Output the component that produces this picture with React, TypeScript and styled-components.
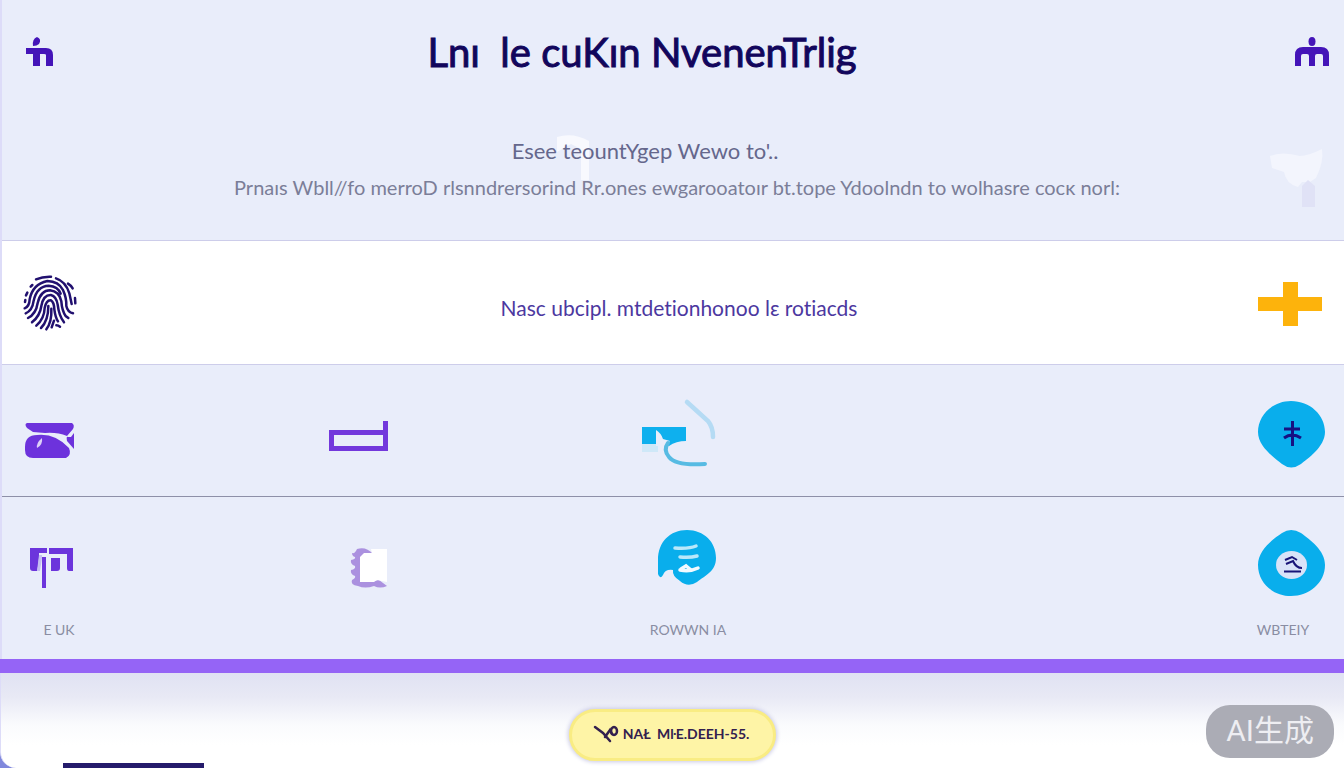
import React from "react";
import styled, { createGlobalStyle } from "styled-components";

const GlobalStyle = createGlobalStyle`
  *, *::before, *::after { box-sizing: border-box; }
  body {
    margin: 0;
    background: #8088dc;
    font-family: Lato, "Noto Sans CJK SC", sans-serif;
    font-variant-ligatures: none;
  }
  h1, p { margin: 0; font-weight: 400; }
  svg { display: block; flex: none; overflow: visible; }
`;

const Page = styled.div`
  position: relative;
  display: flex;
  flex-direction: column;
  min-height: 100vh;
  overflow: hidden;
`;

const Main = styled.main`
  border-left: 2px solid #dddcf8;
  background: #e9edfa;
`;

const Header = styled.header`
  position: relative;
  height: 240px;
  padding: 30px 14px 0 22px;
`;

const TitleBar = styled.div`
  display: flex;
  align-items: center;
  justify-content: space-between;
  height: 44px;
`;

const Title = styled.h1`
  padding-right: 64px;
  color: #12065c;
  font-size: 40px;
  line-height: 44px;
  -webkit-text-stroke: 1px #12065c;
  white-space: pre;
`;

const IconButton = styled.button`
  display: block;
  padding: 0;
  border: 0;
  background: none;
  cursor: pointer;
`;

const Intro = styled.div`
  position: relative;
  display: flex;
  flex-direction: column;
  align-items: center;
  gap: 4px;
  padding-top: 61px;
`;

const IntroLine = styled.p<{ $lead?: boolean }>`
  position: relative;
  padding-right: ${(p) => (p.$lead ? "64px" : "0")};
  color: ${(p) => (p.$lead ? "#65678c" : "#7b7e98")};
  font-size: ${(p) => (p.$lead ? "22px" : "20px")};
  line-height: 32px;
  white-space: nowrap;
`;

const Ghost = styled.svg<{ $side: "center" | "right" }>`
  position: absolute;
  top: ${(p) => (p.$side === "center" ? "58px" : "148px")};
  ${(p) => (p.$side === "center" ? "left: calc(50% - 122px);" : "right: 14px;")}
`;

const Row = styled.section<{ $line: string; $bottom: string }>`
  display: grid;
  grid-template-columns: 30fr 31fr 36fr 31fr;
  border-top: 1px solid ${(p) => p.$line};
  padding: 33px 19px ${(p) => p.$bottom} 22px;
`;

const Feature = styled.section`
  display: flex;
  align-items: center;
  justify-content: space-between;
  height: 124px;
  padding: 0 22px 0 20px;
  border-top: 1px solid #cdcdea;
  background: #fff;
`;

const FeatureText = styled.p`
  padding: 10px 0 0 22px;
  color: #4c389f;
  font-size: 21px;
  line-height: 28px;
`;

const Item = styled.div<{ $end?: boolean }>`
  display: flex;
  flex-direction: column;
  align-items: center;
  justify-self: ${(p) => (p.$end ? "end" : "start")};
  gap: 22px;
`;

const Caption = styled.span`
  color: #8a8da3;
  font-size: 14px;
  line-height: 20px;
  white-space: nowrap;
`;

const Bar = styled.div`
  height: 14px;
  background: #9564f6;
`;

const Footer = styled.footer`
  display: flex;
  flex: 1;
  flex-direction: column;
  align-items: center;
  justify-content: space-between;
  min-height: 95px;
  padding-top: 36px;
  border-left: 1px solid #dddcf8;
  border-bottom-left-radius: 16px;
  background: linear-gradient(#e0e2f3 0, #e8e9f5 24px, #fafbfd 52px, #fff 72px);
`;

const Badge = styled.button`
  display: flex;
  align-items: center;
  gap: 4px;
  height: 52px;
  padding: 0 24px 2px 22px;
  border: 3px solid #f9ec83;
  border-radius: 26px;
  background: #fef4a6;
  box-shadow: 0 0 4px 1px #c9c9e4;
  color: #33204e;
  font: 700 14px/20px Lato, sans-serif;
  white-space: pre;
  cursor: pointer;
`;

const Block = styled.div`
  align-self: flex-start;
  width: 141px;
  height: 5px;
  margin-left: 62px;
  background: #251b6b;
`;

const Watermark = styled.div`
  position: absolute;
  right: 10px;
  bottom: 10px;
  height: 53px;
  padding: 0 20px;
  border-radius: 24px;
  background: #abacb5;
  color: #eeeef2;
  font: 400 30px/52px Roboto, "Noto Sans CJK SC", sans-serif;
`;

const LeftMark = () => (
  <svg width="30" height="32" viewBox="0 0 30 32" fill="#4414b8">
    <path d="M9 10Q8 3 13 1Q18 3 15 8Q13 10 9 10Z" />
    <path d="M2 12H22Q29 12 29 19V30H22V19Q22 18 20 18H16V30H9V18H2Z" />
  </svg>
);

const RightMark = () => (
  <svg width="36" height="32" viewBox="0 0 36 32" fill="#4414b8">
    <ellipse cx="18" cy="5.500" rx="3.500" ry="4.500" />
    <path d="M1 30V19Q1 11 9 11H27Q35 11 35 19V30H29V20Q29 18 27 18H23Q21 18 21 20V30H15V20Q15 18 13 18H9Q7 18 7 20V30Z" />
  </svg>
);

const Fingerprint = () => (
  <svg width="56" height="58" viewBox="66 40 168 174" fill="none" stroke="#21106f" strokeWidth="7.500" strokeLinecap="round">
    <path d="M108 56Q128 47 153 48M168 53Q197 62 208 98L215 130M204 69Q214 75 218 83M225 112L226 128" />
    <path d="M92 78L97 73M78 104L82 96M75 124L76 118" />
    <path d="M74 143Q88 138 89 116Q98 70 142 61Q176 62 189 88Q200 112 199 136Q203 155 219 158" />
    <path d="M77 158Q97 150 101 120Q111 76 146 75Q174 77 182 99" />
    <path d="M84 172Q108 160 113 127Q122 89 150 89Q178 92 184 122Q186 150 197 166L205 172" />
    <path d="M96 185Q120 166 124 136Q130 102 153 103Q169 107 173 132Q177 166 192 185" />
    <path d="M109 195Q133 174 134 142Q139 117 153 119Q162 124 163 146Q166 170 174 182" />
    <path d="M123 202Q145 180 145 136M139 206Q156 184 154 144M155 200L162 180M169 194Q175 194 180 198" />
  </svg>
);

const Plus = () => (
  <svg width="64" height="48" viewBox="0 -2 64 48" fill="#fdb30c">
    <path d="M25 1H40V16H64V30H40V45H25V30H0V16H25Z" />
  </svg>
);

const Pouch = () => (
  <svg width="70" height="68" viewBox="24 398 70 68" fill="#6d32dc">
    <path d="M27 423H72Q75 425 73 429L67 436Q57 432 45 433L33 432L27 428Q24 424 27 423Z" />
    <path d="M25 447Q25 435 37 435Q55 433 69 448Q72 455 66 458H33Q25 458 25 450Z" />
    <path d="M74 433V449L67 441Q66 436 68 437L71 437Z" />
    <path d="M42 438Q43 445 37 448Q36 443 42 438Z" fill="#ddd0f8" />
  </svg>
);

const Tray = () => (
  <svg width="60" height="68" viewBox="329 398 60 68" fill="none" stroke="#7338dc" strokeWidth="5">
    <path d="M385.500 421V432.500H331.500V448.500H385.500V430" />
  </svg>
);

const Swirl = () => (
  <svg width="88" height="68" viewBox="644 398 88 68">
    <path d="M642 444H658V452H642Z" fill="#cfe8f8" />
    <path d="M642 427H686V441Q676 441 669 446L662 444H642Z" fill="#0eb0ee" />
    <path d="M656 430Q661 433 663 439L670 441Q667 444 664 446H656Z" fill="#e9edfa" />
    <path d="M668 443Q663 450 669 457Q676 466 705 464" fill="none" stroke="#57bbe3" strokeWidth="4" strokeLinecap="round" />
    <path d="M687 402L708 421Q713 427 713 437" fill="none" stroke="#b5dbf4" strokeWidth="4.500" strokeLinecap="round" />
  </svg>
);

const StarPin = () => (
  <svg width="84" height="68" viewBox="1241 398 84 68">
    <path d="M1291 401C1310 401 1325 415 1325 432C1325 447 1307 459 1301 464Q1291 471 1282 464C1275 458 1258 447 1258 432C1258 415 1273 401 1291 401Z" fill="#09aeec" />
    <path d="M1292.500 421V446M1284 429H1300M1284 438Q1292 432 1301 438" fill="none" stroke="#171182" strokeWidth="3" />
  </svg>
);

const Gate = () => (
  <svg width="70" height="68" viewBox="24 530 70 68" fill="#6c35dc">
    <path d="M30 548H47V553H39V558Q38 568 37 571H33Q30 571 30 568Z" />
    <path d="M49 548H73V571H69Q67 571 67 568V554H49Z" />
    <path d="M42 557H46V588H42ZM51 558H60V568Q60 571 57 571H51Z" />
    <path d="M39 555H42V558L40 571H37Z" fill="#c5bff1" />
  </svg>
);

const Notebook = () => (
  <svg width="60" height="68" viewBox="329 530 60 68">
    <path d="M357 549Q366 546 373 554L363 581H374L379 580L387 586Q380 589 374 586Q365 589 358 586Q350 585 352 580Q356 578 355 576Q350 574 351 570Q356 569 355 566Q350 564 351 560Q356 559 355 557Q352 556 352 553Q355 554 357 549Z" fill="#ab91df" />
    <path d="M364 553H372L371 549H387V582L377 580L374 582H360V557Z" fill="#fff" />
  </svg>
);

const Chat = () => (
  <svg width="88" height="68" viewBox="644 530 88 68">
    <path d="M687 530C704 530 716 542 716 558C716 571 706 575 697 582Q688 588 680 581Q672 576 673 570Q665 569 663 575Q660 580 658 574V560C658 542 670 530 687 530Z" fill="#09aeec" />
    <g fill="none" stroke="#b9e8fa" strokeWidth="3.500" strokeLinecap="round">
      <path d="M675 548Q689 549 696 546M680 557Q690 558 697 556" />
      <path d="M680 570Q690 572 698 568M681 569L686 566L691 570" stroke="#f3faff" />
    </g>
  </svg>
);

const DropPin = () => (
  <svg width="84" height="68" viewBox="1241 530 84 68">
    <path d="M1282 533Q1291 527 1301 533C1310 540 1325 550 1325 565C1325 583 1309 596 1291 596C1273 596 1258 583 1258 565C1258 550 1273 539 1282 533Z" fill="#09aeec" />
    <ellipse cx="1291.500" cy="565" rx="15.500" ry="14" fill="#d9e3f8" />
    <path d="M1285 560L1292 557L1297 560M1286 564L1293 561Q1296 568 1302 568M1284 571.500H1301" fill="none" stroke="#191578" strokeWidth="2" />
  </svg>
);

const Branch = () => (
  <svg width="25" height="18" viewBox="0 0 25 18" fill="none" stroke="#33204e" strokeWidth="2.500" strokeLinecap="round">
    <path d="M1 2L9 8L16 16M11 12L16 5L18 9" />
    <ellipse cx="20" cy="6" rx="3" ry="4" />
  </svg>
);

export default function App() {
  return (
    <>
      <GlobalStyle />
      <Page>
        <Main>
          <Header>
            <Ghost $side="right" width="66" height="62" viewBox="0 0 66 62" aria-hidden="true">
              <path d="M6 8Q18 3 36 8Q44 8 58 1Q60 14 52 30L46 34H38L34 39Q22 36 20 24L8 20Z" fill="#f3f5fd" />
              <path d="M38 38L44 32L51 38V59H38Z" fill="#e0e2f6" />
            </Ghost>
            <TitleBar>
              <IconButton aria-label="Home"><LeftMark /></IconButton>
              <Title>{"Lnı  le cuKın NvenenTrlig"}</Title>
              <IconButton aria-label="Account"><RightMark /></IconButton>
            </TitleBar>
            <Intro>
              <Ghost $side="center" width="36" height="50" viewBox="0 0 36 50" aria-hidden="true">
                <path d="M2 5Q18 0 34 9V48H26V17L16 12L2 20Z" fill="#f8f9fe" />
              </Ghost>
              <IntroLine $lead>Esee teountYgep Wewo to'..</IntroLine>
              <IntroLine>Prnaıs Wbll//fo merroD rlsnndrersorind Rr.ones ewgarooatoır bt.tope Ydoolndn to wolhasre cocĸ norl:</IntroLine>
            </Intro>
          </Header>
          <Feature>
            <Fingerprint />
            <FeatureText>Nasc ubcipl. mtdetionhonoo lɛ rotiacds</FeatureText>
            <IconButton aria-label="Add"><Plus /></IconButton>
          </Feature>
          <Row $line="#cdcdea" $bottom="30px">
            <Item><Pouch /></Item>
            <Item><Tray /></Item>
            <Item><Swirl /></Item>
            <Item $end><StarPin /></Item>
          </Row>
          <Row $line="#8e90a8" $bottom="19px">
            <Item><Gate /><Caption>E UK</Caption></Item>
            <Item><Notebook /></Item>
            <Item><Chat /><Caption>ROWWN IA</Caption></Item>
            <Item $end><DropPin /><Caption>WBTEIY</Caption></Item>
          </Row>
        </Main>
        <Bar />
        <Footer>
          <Badge><Branch />{"NAŁ  MŀE.DEEH-55."}</Badge>
          <Block />
        </Footer>
        <Watermark>AI生成</Watermark>
      </Page>
    </>
  );
}
